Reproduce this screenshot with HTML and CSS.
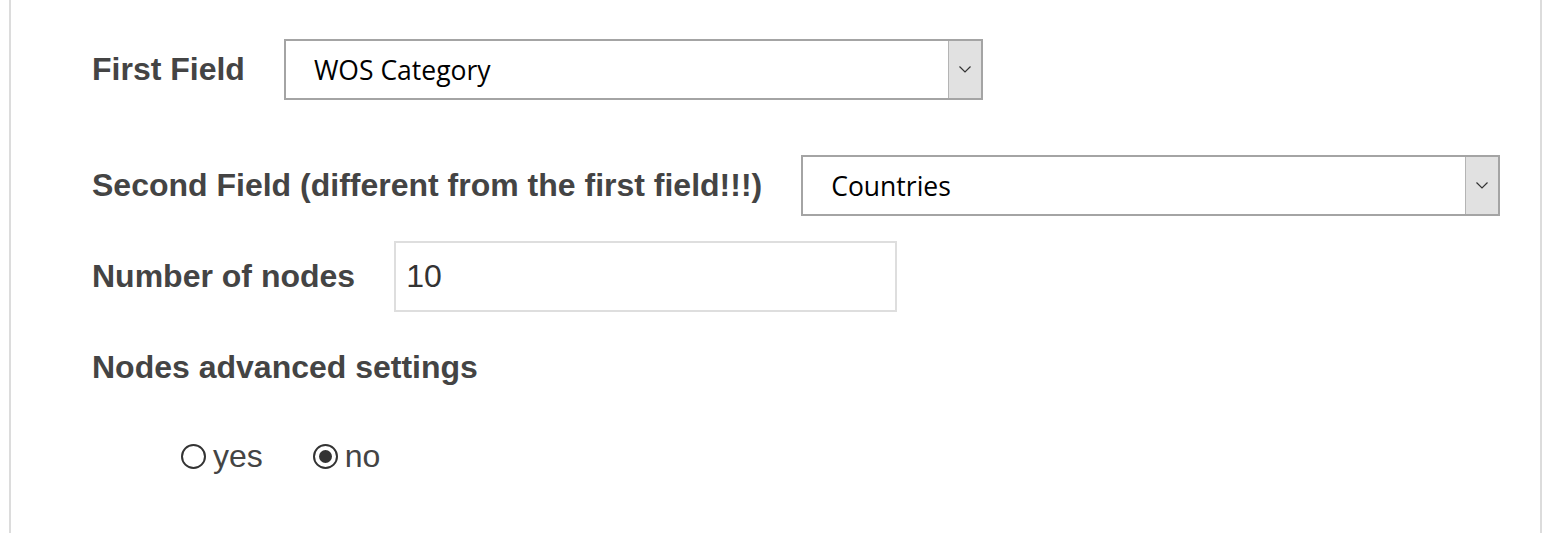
FILE: index.html
```html
<!DOCTYPE html>
<html>
<head>
<meta charset="utf-8">
<link rel="stylesheet" href="styles.css">
</head>
<body>
<div class="panel">
  <div class="row row-first">
    <label class="lbl">First Field</label>
    <div class="select">
      <span class="select-text">WOS Category</span>
      <span class="arrow"><svg width="12" height="7" viewBox="0 0 12 7"><path d="M0.5 0.5 L6 6 L11.5 0.5" fill="none" stroke="#333" stroke-width="1.2"/></svg></span>
    </div>
  </div>
  <div class="row row-second">
    <label class="lbl">Second Field (different from the first field!!!)</label>
    <div class="select">
      <span class="select-text">Countries</span>
      <span class="arrow"><svg width="12" height="7" viewBox="0 0 12 7"><path d="M0.5 0.5 L6 6 L11.5 0.5" fill="none" stroke="#333" stroke-width="1.2"/></svg></span>
    </div>
  </div>
  <div class="row row-nodes">
    <label class="lbl">Number of nodes</label>
    <div class="input">10</div>
  </div>
  <div class="row row-adv">
    <label class="lbl">Nodes advanced settings</label>
  </div>
  <div class="radios">
    <span class="radio-item"><span class="radio"></span><span class="radio-label">yes</span></span>
    <span class="radio-item"><span class="radio checked"></span><span class="radio-label">no</span></span>
  </div>
</div>
</body>
</html>
```
FILE: styles.css
```css
html, body {
  margin: 0;
  padding: 0;
  background: #fff;
}
body {
  font-family: "Liberation Sans", Arial, sans-serif;
  color: #444;
}
.panel {
  margin-left: 9px;
  width: 1533px;
  height: 533px;
  border-left: 2px solid #dcdcdc;
  border-right: 2px solid #dcdcdc;
  padding-left: 81px;
  padding-top: 39px;
  box-sizing: border-box;
}
.row {
  display: flex;
  align-items: center;
}
.lbl {
  font-size: 32px;
  font-weight: bold;
  color: #444;
  white-space: nowrap;
}
.row-first .lbl { margin-right: 39px; }
.row-second { margin-top: 55px; }
.row-second .lbl { margin-right: 39px; }
.row-nodes { margin-top: 25px; }
.row-nodes .lbl { margin-right: 39px; }
.row-adv { margin-top: 35px; height: 40px; }
.select {
  width: 699px;
  height: 61px;
  box-sizing: border-box;
  border: 2px solid #a4a4a4;
  display: flex;
  align-items: center;
  background: #fff;
}
.select-text {
  flex: 1;
  padding-left: 28px;
  font-family: "Open Sans", sans-serif;
  font-size: 26.5px;
  color: #000;
}
.arrow {
  width: 32px;
  height: 100%;
  background: #e1e1e1;
  border-left: 1px solid #b4b4b4;
  display: flex;
  align-items: center;
  justify-content: center;
}
.input {
  width: 503px;
  height: 71px;
  box-sizing: border-box;
  border: 2px solid #dedede;
  padding-left: 10px;
  display: flex;
  align-items: center;
  font-size: 32px;
  color: #333;
}
.radios {
  display: flex;
  align-items: center;
  margin-top: 49px;
  margin-left: 89px;
  height: 40px;
  gap: 50px;
}
.radio-item {
  display: flex;
  align-items: center;
}
.radio {
  width: 21px;
  height: 21px;
  border: 2px solid #333;
  border-radius: 50%;
  box-sizing: content-box;
  position: relative;
  margin-right: 7px;
}
.radio.checked::after {
  content: "";
  position: absolute;
  left: 4px;
  top: 4px;
  width: 13px;
  height: 13px;
  border-radius: 50%;
  background: #333;
}
.radio-label {
  font-size: 32px;
  color: #444;
}
```
